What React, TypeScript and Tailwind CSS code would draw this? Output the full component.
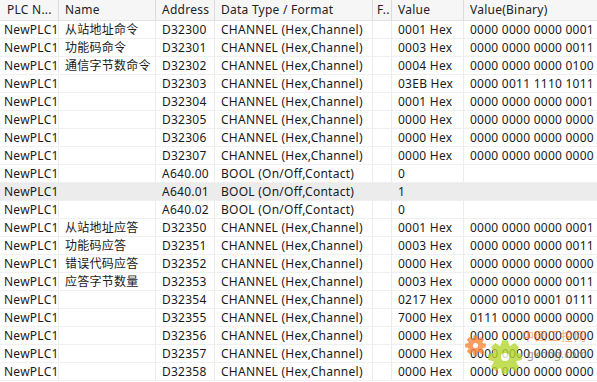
type Row = {
  plc: string;
  name: string;
  addr: string;
  type: string;
  value: string;
  bin: string;
  selected?: boolean;
};

const CH = "CHANNEL (Hex,Channel)";
const BO = "BOOL (On/Off,Contact)";

const rows: Row[] = [
  { plc: "NewPLC1", name: "从站地址命令", addr: "D32300", type: CH, value: "0001 Hex", bin: "0000 0000 0000 0001" },
  { plc: "NewPLC1", name: "功能码命令", addr: "D32301", type: CH, value: "0003 Hex", bin: "0000 0000 0000 0011" },
  { plc: "NewPLC1", name: "通信字节数命令", addr: "D32302", type: CH, value: "0004 Hex", bin: "0000 0000 0000 0100" },
  { plc: "NewPLC1", name: "", addr: "D32303", type: CH, value: "03EB Hex", bin: "0000 0011 1110 1011" },
  { plc: "NewPLC1", name: "", addr: "D32304", type: CH, value: "0001 Hex", bin: "0000 0000 0000 0001" },
  { plc: "NewPLC1", name: "", addr: "D32305", type: CH, value: "0000 Hex", bin: "0000 0000 0000 0000" },
  { plc: "NewPLC1", name: "", addr: "D32306", type: CH, value: "0000 Hex", bin: "0000 0000 0000 0000" },
  { plc: "NewPLC1", name: "", addr: "D32307", type: CH, value: "0000 Hex", bin: "0000 0000 0000 0000" },
  { plc: "NewPLC1", name: "", addr: "A640.00", type: BO, value: "0", bin: "" },
  { plc: "NewPLC1", name: "", addr: "A640.01", type: BO, value: "1", bin: "", selected: true },
  { plc: "NewPLC1", name: "", addr: "A640.02", type: BO, value: "0", bin: "" },
  { plc: "NewPLC1", name: "从站地址应答", addr: "D32350", type: CH, value: "0001 Hex", bin: "0000 0000 0000 0001" },
  { plc: "NewPLC1", name: "功能码应答", addr: "D32351", type: CH, value: "0003 Hex", bin: "0000 0000 0000 0011" },
  { plc: "NewPLC1", name: "错误代码应答", addr: "D32352", type: CH, value: "0000 Hex", bin: "0000 0000 0000 0000" },
  { plc: "NewPLC1", name: "应答字节数量", addr: "D32353", type: CH, value: "0003 Hex", bin: "0000 0000 0000 0011" },
  { plc: "NewPLC1", name: "", addr: "D32354", type: CH, value: "0217 Hex", bin: "0000 0010 0001 0111" },
  { plc: "NewPLC1", name: "", addr: "D32355", type: CH, value: "7000 Hex", bin: "0111 0000 0000 0000" },
  { plc: "NewPLC1", name: "", addr: "D32356", type: CH, value: "0000 Hex", bin: "0000 0000 0000 0000" },
  { plc: "NewPLC1", name: "", addr: "D32357", type: CH, value: "0000 Hex", bin: "0000 0000 0000 0000" },
  { plc: "NewPLC1", name: "", addr: "D32358", type: CH, value: "0000 Hex", bin: "0000 0000 0000 0000" },
];

const cols = "grid grid-cols-[59px_97px_59px_158px_19px_72px_1fr]";

function Gear({ size, color, teeth }: { size: number; color: string; teeth: number }) {
  const c = size / 2;
  const rOut = size / 2;
  const rIn = size * 0.36;
  const pts: string[] = [];
  for (let i = 0; i < teeth; i++) {
    const a = (i / teeth) * Math.PI * 2;
    const w = Math.PI / teeth;
    const p = (ang: number, r: number) => `${c + r * Math.cos(ang)},${c + r * Math.sin(ang)}`;
    pts.push(p(a - w * 0.9, rIn), p(a - w * 0.45, rOut), p(a + w * 0.45, rOut), p(a + w * 0.9, rIn));
  }
  return (
    <svg width={size} height={size} viewBox={`0 0 ${size} ${size}`}>
      <polygon points={pts.join(" ")} fill={color} />
      <circle cx={c} cy={c} r={size * 0.12} fill="white" />
    </svg>
  );
}

export default function App() {
  return (
    <div
      className="relative w-[597px] h-[382px] overflow-hidden bg-white text-[12px] tracking-[0.25px] text-[#1a1a1a]"
      style={{ fontFamily: '"Noto Sans", "Noto Sans CJK SC", sans-serif' }}
    >
      <div className={`${cols} h-[21px] bg-[#f6f6f6] border-b border-[#e3e3e3] text-[#222]`}>
        <div className="pl-[7px] leading-[20px] border-r border-[#dcdcdc] whitespace-nowrap overflow-hidden">PLC N...</div>
        <div className="pl-[6px] leading-[20px] border-r border-[#dcdcdc]">Name</div>
        <div className="pl-[6px] leading-[20px] border-r border-[#dcdcdc]">Address</div>
        <div className="pl-[6px] leading-[20px] border-r border-[#dcdcdc]">Data Type / Format</div>
        <div className="pl-[4px] leading-[20px] border-r border-[#dcdcdc] overflow-hidden">F..</div>
        <div className="pl-[6px] leading-[20px] border-r border-[#dcdcdc]">Value</div>
        <div className="pl-[6px] leading-[20px]">Value(Binary)</div>
      </div>
      {rows.map((r) => (
        <div
          key={r.addr}
          className={`${cols} h-[18px] border-b border-[#f0f0f0] ${r.selected ? "bg-[#ececec]" : ""}`}
        >
          <div className="pl-[4px] leading-[17px] border-r border-[#ececec] whitespace-nowrap">{r.plc}</div>
          <div className="pl-[6px] leading-[17px] border-r border-[#ececec] whitespace-nowrap">{r.name}</div>
          <div className="pl-[6px] leading-[17px] border-r border-[#ececec]">{r.addr}</div>
          <div className="pl-[6px] leading-[17px] border-r border-[#ececec] whitespace-nowrap">{r.type}</div>
          <div className="border-r border-[#ececec]" />
          <div className="pl-[6px] leading-[17px] border-r border-[#ececec] whitespace-nowrap">{r.value}</div>
          <div className="pl-[6px] leading-[17px] whitespace-nowrap">{r.bin}</div>
        </div>
      ))}

      {/* gkong watermark */}
      <div className="absolute left-[465px] top-[335px] opacity-80">
        <Gear size={21} color="#f7863a" teeth={8} />
      </div>
      <div className="absolute left-[488px] top-[340px] opacity-80">
        <Gear size={34} color="#b5d730" teeth={8} />
      </div>
      <div className="absolute left-[522px] top-[330px] text-[12px] leading-[14px] text-[#f7863a] opacity-70 tracking-[1px]">
        中国工控网
      </div>
      <div className="absolute left-[527px] top-[347px] text-[11px] leading-[13px] text-[#777] opacity-80">
        gkong.com
      </div>
    </div>
  );
}
